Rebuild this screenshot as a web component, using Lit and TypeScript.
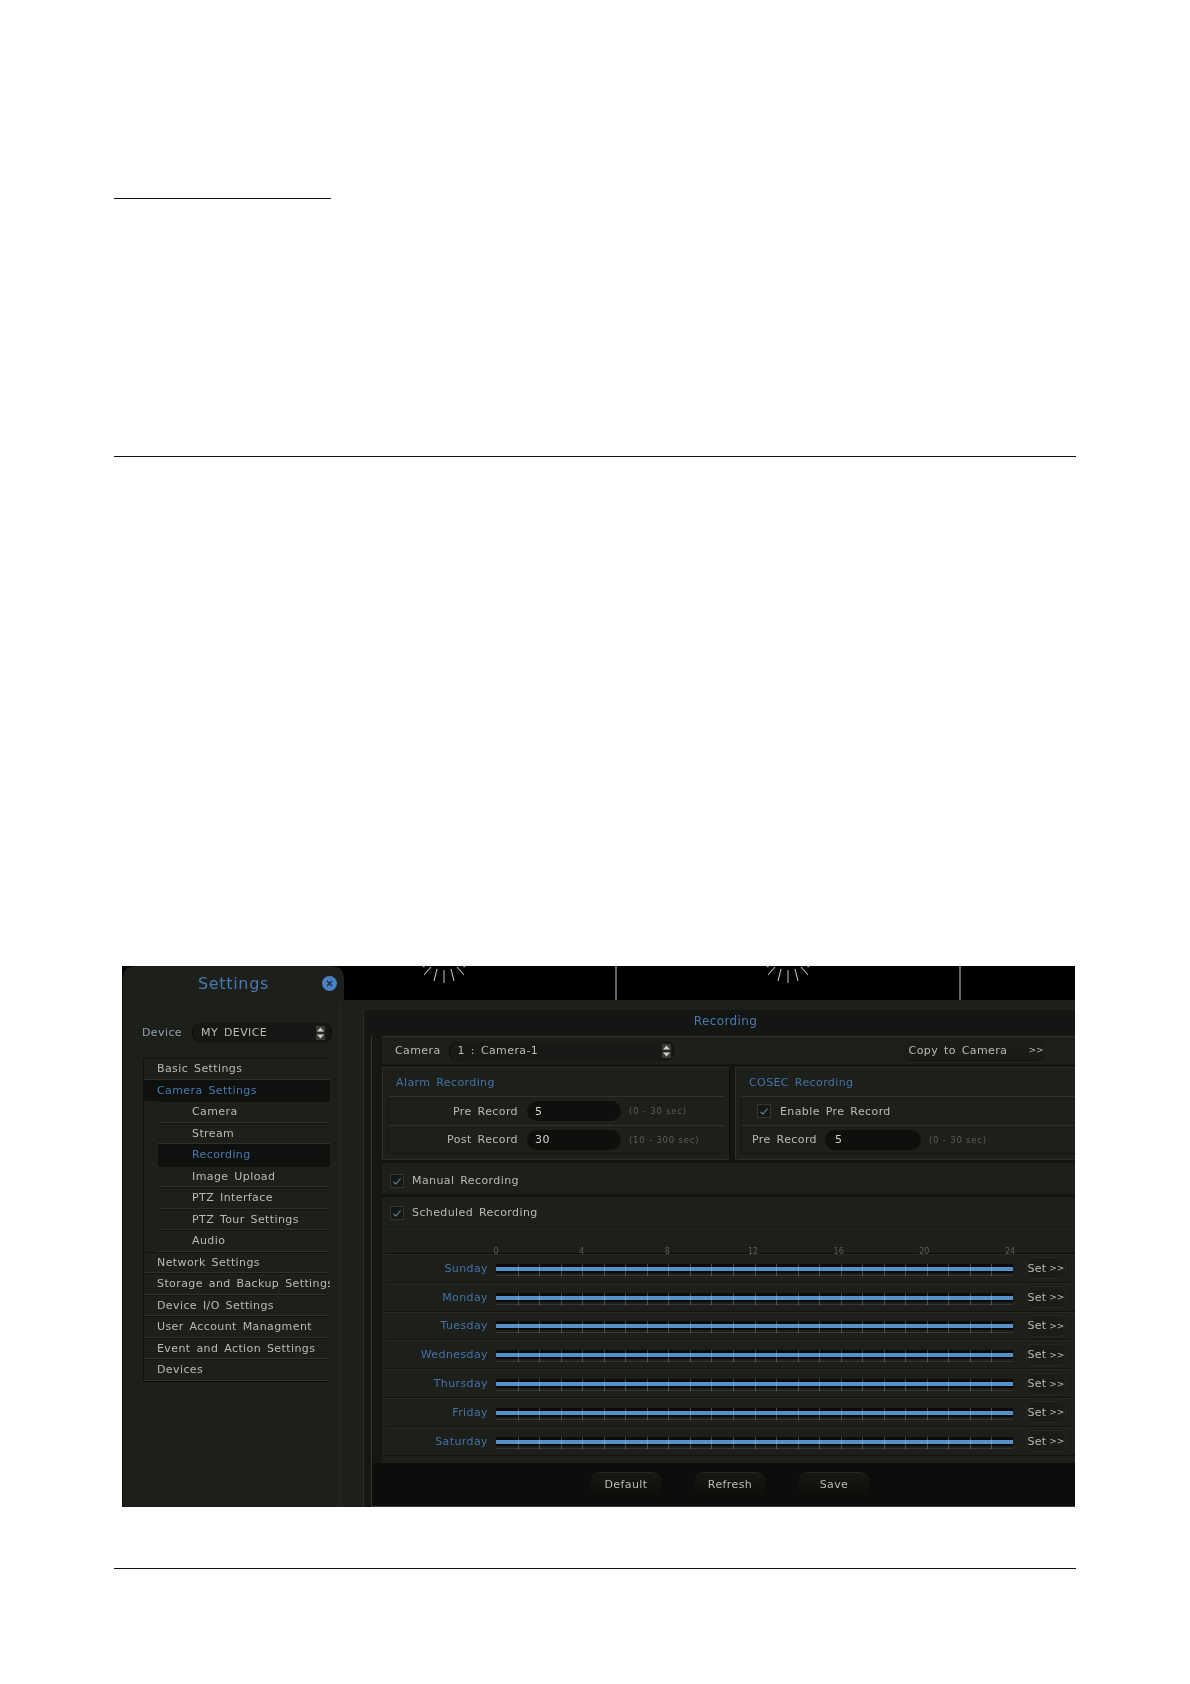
import { LitElement, html, css, svg } from "lit";
import { customElement } from "lit/decorators.js";

const TOP_ITEMS_A = ["Basic Settings"];
const CHILDREN = ["Camera", "Stream", "Recording", "Image Upload", "PTZ Interface", "PTZ Tour Settings", "Audio"];
const TOP_ITEMS_B = ["Network Settings", "Storage and Backup Settings", "Device I/O Settings", "User Account Managment", "Event and Action Settings", "Devices"];
const DAYS = ["Sunday", "Monday", "Tuesday", "Wednesday", "Thursday", "Friday", "Saturday"];
const HOURS = [0, 4, 8, 12, 16, 20, 24];

const spinner = html`<svg class="spin" width="9" height="14" viewBox="0 0 9 14"><rect width="9" height="14" fill="#3a3c38"/><path d="M4.5 1.5 8 5.5H1Z" fill="#cfcfc7"/><path d="M4.5 12.5 8 8.5H1Z" fill="#cfcfc7"/><rect y="6.5" width="9" height="1" fill="#111"/></svg>`;
const check = html`<svg class="check" width="14" height="14" viewBox="0 0 14 14"><rect x=".5" y=".5" width="13" height="13" fill="#151814" stroke="#33362f"/><path d="M3.5 8 6 10 10.5 4.5" fill="none" stroke="#6a88ad" stroke-width="1.1"/></svg>`;
const rays = svg`<path d="M444 970V983M437 969 434 981M451 969 454 981M431 967 424 975M457 967 464 975M426 965 423 967M462 965 465 967" stroke="#b4b4b4" stroke-width="1.1" fill="none" transform="translate(-408 -966)"/>`;

@customElement("app-root")
export class AppRoot extends LitElement {
  static styles = css`
    :host { display: block; width: 1190px; height: 1684px; background: #fff; overflow: hidden; font-family: "DejaVu Sans", sans-serif; }
    .rule { height: 1px; background: #111; margin-left: 114px; }
    .rule.short { width: 217px; margin-top: 198px; }
    .rule.long { width: 962px; }
    .rule.mid { margin-top: 257px; }
    .rule.end { margin-top: 61px; }
    .shot { margin: 509px 0 0 122px; width: 953px; height: 541px; display: grid; grid-template-columns: 222px 1fr; background: #000; color: #b9bab2; font-size: 11px; letter-spacing: .4px; word-spacing: 2px; overflow: hidden; filter: blur(.35px); }

    .side { background: #1d1f1b; border-radius: 12px 12px 0 0; display: flex; flex-direction: column; border-left: 1px solid #0a0a0a; }
    .side-head { height: 37px; padding-bottom: 3px; display: flex; align-items: center; justify-content: center; position: relative; color: #4a79b2; font-size: 16px; letter-spacing: .7px; box-sizing: border-box; }
    .close { position: absolute; left: 199px; top: 10px; width: 15px; height: 15px; border-radius: 50%; background: #4a80c4; display: flex; }
    .side-body { flex: 1; margin-right: 4px; border-right: 1px solid #262823; }
    .device { display: flex; align-items: center; margin: 20px 0 0 19px; height: 19px; color: #8fa0ad; }
    .device span { width: 50px; }
    .select { height: 20px; display: flex; align-items: center; justify-content: space-between; box-sizing: border-box; background: #151714; border-radius: 9px; border-left: 1px solid #0b0c0a; border-right: 1px solid #0b0c0a; color: #b9bab2; }
    .device .select { width: 140px; padding: 0 6px 0 8px; }
    .menu { margin: 16px 0 0 20px; width: 186px; border-left: 1px solid #0f100e; border-bottom: 1px solid #0d0e0c; }
    .item { height: 21.5px; line-height: 20.5px; box-sizing: border-box; padding-left: 13px; border-bottom: 1px solid #2e302b; border-top: 1px solid #141512; white-space: nowrap; overflow: hidden; }
    .item.on { background: #0e110e; color: #4a79b2; border-color: #0e110e; }
    .child { margin-left: 14px; padding-left: 34px; }

    .main { display: flex; flex-direction: column; min-width: 0; }
    .feeds { height: 34px; display: grid; grid-template-columns: 273px 344px 1fr; background: #000; }
    .feed { position: relative; border-right: 2px solid #666; }
    .feed:last-child { border: 0; }
    .feed svg { position: absolute; top: 0; left: 64px; }
    .feed + .feed svg { left: 135px; }
    .body { flex: 1; background: #1d1f1b; padding-top: 10px; display: flex; flex-direction: column; }
    .inner { flex: 1; margin-left: 19px; background: #141613; border-left: 1px solid #2a2c27; display: flex; flex-direction: column; min-height: 0; }
    .title { height: 26px; padding: 0 0 4px 12px; box-sizing: border-box; display: flex; align-items: center; justify-content: center; color: #4a79b2; font-size: 12px; }
    .rail { flex: 1; margin-left: 7px; border-left: 1px solid #363833; display: flex; flex-direction: column; min-height: 0; }
    .content { margin-left: 10px; display: flex; flex-direction: column; gap: 3px; background: #131512; }
    .bar { background: #1d1f1b; display: flex; align-items: center; box-sizing: border-box; }
    .cam { height: 28px; padding-left: 13px; border-top: 1px solid #30322d; }
    .cam-select { width: 225px; margin-left: 8px; padding: 0 2px 0 8px; background: #181a17; }
    .copy { margin-left: 230px; width: 140px; height: 20px; display: flex; align-items: center; justify-content: space-between; box-sizing: border-box; padding: 0 0 0 5px; border-bottom: 1px solid #111; background: #1a1c18; border-radius: 6px; }
    .copy i, .set i { font-style: normal; font-size: 9px; letter-spacing: 0; }
    .groups { display: grid; grid-template-columns: 348px 1fr; gap: 5px; }
    .group { height: 93px; background: #1d1f1b; border: 1px solid #2c2e29; border-right-color: #0e0f0d; box-sizing: border-box; padding: 0 5px; display: flex; flex-direction: column; }
    .group h3 { margin: 0; font: inherit; height: 28px; display: flex; align-items: center; color: #4472a8; padding-left: 8px; }
    .row { height: 29px; display: flex; align-items: center; box-sizing: border-box; border-top: 1px solid #2f312c; border-left: 1px solid #141512; }
    .row:last-child { border-bottom: 1px solid #141512; }
    .row .lbl { width: 129px; text-align: right; flex: none; white-space: nowrap; }
    .field { width: 94px; height: 20px; margin-left: 9px; background: #0e100e; border-radius: 10px; padding-left: 8px; box-sizing: border-box; display: flex; align-items: center; color: #d2d3cb; }
    .hint { margin-left: 8px; font-size: 8.5px; color: #5c5e58; letter-spacing: .8px; word-spacing: 0; }
    .group.c { border-right: 0; padding-right: 0; }
    .row .check { margin-left: 15px; margin-right: 9px; }
    .row .short-lbl { margin-left: 10px; width: 64px; text-align: left; }
    .row .short-lbl + .field { width: 96px; margin-left: 9px; padding-left: 10px; }
    .tog { height: 31px; padding: 4px 0 0 8px; }
    .tog .check { margin-right: 8px; }
    .sched { height: 266px; display: flex; flex-direction: column; padding-top: 1px; }
    .sched .tog { flex: none; height: 29px; padding-top: 0; }
    .grid { margin: 2px 0 0 6px; }
    .scale { height: 23px; position: relative; border-bottom: 1px solid #0b0c0a; border-top: 1px solid #242621; }
    .scale span { position: absolute; top: 17px; font-size: 8px; color: #5c5e58; transform: translateX(-50%); letter-spacing: 0; }
    .day { height: 28.8px; display: flex; align-items: center; box-sizing: border-box; border-bottom: 1px solid #121311; border-top: 1px solid #282a25; }
    .day b { width: 103px; text-align: right; font-weight: 400; color: #4472a8; flex: none; }
    .track { margin: 3px 0 0 8px; width: 517px; height: 11px; position: relative; background: linear-gradient(#0a0b0a, #0a0b0a) 0 0/100% 9px no-repeat; flex: none; border-bottom: 1px solid #34362f; }
    .track .fill { position: absolute; left: 0; right: 0; top: 3px; height: 4px; background: #5590cc; }
    .track .tick { position: absolute; top: 0; bottom: -1px; width: 1px; background: rgba(200, 200, 190, .3); }
    .set { margin-left: 13px; width: 40px; height: 22px; box-sizing: border-box; border-radius: 7px; border: 1px solid #262822; display: flex; align-items: center; justify-content: center; gap: 3px; background: #1a1c18; letter-spacing: .2px; }
    .foot { flex: 1; background: #0c0e0b; display: flex; padding: 9px 0 0 219px; gap: 34px; border-bottom: 1px solid #3a3c36; min-height: 0; }
    .btn { width: 70px; height: 24px; box-sizing: border-box; border-radius: 9px 9px 0 0; border-top: 1px solid #262822; display: flex; align-items: center; justify-content: center; color: #b9bab2; background: linear-gradient(#161814, #0c0e0b); }
  `;

  private item(t: string, on = false, child = false) {
    return html`<div class="item ${on ? "on" : ""} ${child ? "child" : ""}">${t}</div>`;
  }

  private day(d: string) {
    const ticks = Array.from({ length: 23 }, (_, i) => (i + 1) * (517 / 24));
    return html`<div class="day">
      <b>${d}</b>
      <div class="track">
        <div class="fill"></div>
        ${ticks.map((x) => html`<div class="tick" style="left:${x}px"></div>`)}
      </div>
      <div class="set">Set <i>&gt;&gt;</i></div>
    </div>`;
  }

  render() {
    return html`
      <div class="rule short"></div>
      <div class="rule long mid"></div>
      <div class="shot">
        <aside class="side">
          <div class="side-head">Settings
            <span class="close"><svg width="15" height="15" viewBox="0 0 15 15"><path d="M5 5l5 5M10 5l-5 5" stroke="#1d2a3c" stroke-width="1.4"/></svg></span>
          </div>
          <div class="side-body">
            <div class="device"><span>Device</span><div class="select">MY DEVICE ${spinner}</div></div>
            <nav class="menu">
              ${TOP_ITEMS_A.map((t) => this.item(t))}
              ${this.item("Camera Settings", true)}
              ${CHILDREN.map((t) => this.item(t, t === "Recording", true))}
              ${TOP_ITEMS_B.map((t) => this.item(t))}
            </nav>
          </div>
        </aside>
        <section class="main">
          <div class="feeds">
            <div class="feed"><svg width="72" height="20" viewBox="0 0 72 20">${rays}</svg></div>
            <div class="feed"><svg width="72" height="20" viewBox="0 0 72 20">${rays}</svg></div>
            <div class="feed"></div>
          </div>
          <div class="body">
            <div class="inner">
              <div class="title">Recording</div>
              <div class="rail">
                <div class="content">
                  <div class="bar cam">
                    <span>Camera</span>
                    <div class="select cam-select">1 : Camera-1 ${spinner}</div>
                    <div class="copy">Copy to Camera <i>&gt;&gt;</i></div>
                  </div>
                  <div class="groups">
                    <div class="group">
                      <h3>Alarm Recording</h3>
                      <div class="row"><span class="lbl">Pre Record</span><div class="field">5</div><span class="hint">(0 - 30 sec)</span></div>
                      <div class="row"><span class="lbl">Post Record</span><div class="field">30</div><span class="hint">(10 - 300 sec)</span></div>
                    </div>
                    <div class="group c">
                      <h3>COSEC Recording</h3>
                      <div class="row">${check}<span>Enable Pre Record</span></div>
                      <div class="row"><span class="lbl short-lbl">Pre Record</span><div class="field">5</div><span class="hint">(0 - 30 sec)</span></div>
                    </div>
                  </div>
                  <div class="bar tog">${check}<span>Manual Recording</span></div>
                  <div class="bar sched">
                    <div class="bar tog" style="width:100%">${check}<span>Scheduled Recording</span></div>
                    <div class="grid" style="width:100%">
                      <div class="scale">${HOURS.map((h) => html`<span style="left:${111 + (h * 514) / 24}px">${h}</span>`)}</div>
                      ${DAYS.map((d) => this.day(d))}
                    </div>
                  </div>
                </div>
                <div class="foot">
                  <div class="btn">Default</div>
                  <div class="btn">Refresh</div>
                  <div class="btn">Save</div>
                </div>
              </div>
            </div>
          </div>
        </section>
      </div>
      <div class="rule long end"></div>
    `;
  }
}
